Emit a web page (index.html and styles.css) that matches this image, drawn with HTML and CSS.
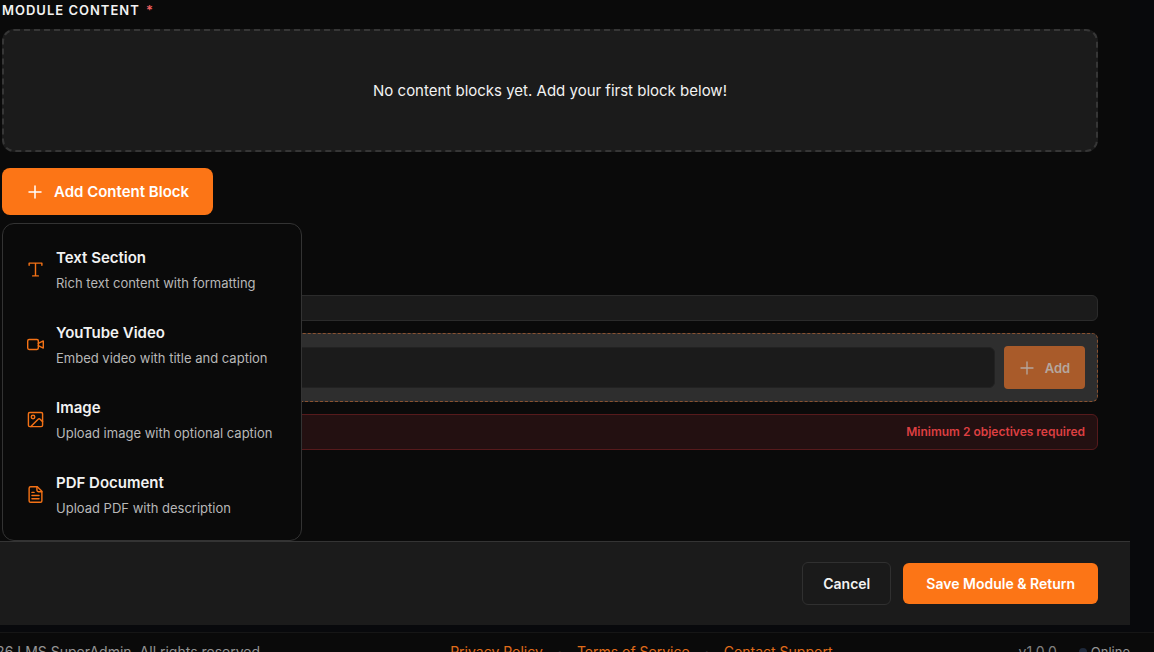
FILE: index.html
```html
<!DOCTYPE html>
<html lang="en">
<head>
<meta charset="utf-8">
<meta name="viewport" content="width=device-width, initial-scale=1">
<title>Module editor</title>
<link rel="stylesheet" href="styles.css">
</head>
<body>
<main class="editor">
  <form class="editor-body">
    <h2 class="section-label">Module Content <span class="required">*</span></h2>
    <p class="empty-state">No content blocks yet. Add your first block below!</p>

    <div class="add-block">
      <button type="button" class="btn btn-primary btn-add-block" aria-expanded="true">
        <svg class="icon icon-plus" viewBox="0 0 24 24"><path d="M4 12h16M12 4v16"/></svg>
        Add Content Block
      </button>
      <div class="block-menu">
        <button type="button" class="block-option">
          <svg class="icon" viewBox="0 0 24 24"><path d="M3 6V3h18v3M8 21h8M12 3v18"/></svg>
          <span class="option-text"><strong class="option-title">Text Section</strong><span class="option-desc">Rich text content with formatting</span></span>
        </button>
        <button type="button" class="block-option">
          <svg class="icon" viewBox="0 0 24 24"><rect x="1" y="5" width="15" height="14" rx="2"/><path d="M16 10.500l7-3.500v10l-7-3.500"/></svg>
          <span class="option-text"><strong class="option-title">YouTube Video</strong><span class="option-desc">Embed video with title and caption</span></span>
        </button>
        <button type="button" class="block-option">
          <svg class="icon" viewBox="0 0 24 24"><rect x="2" y="2" width="20" height="20" rx="2"/><circle cx="8.500" cy="8.500" r="2.500"/><path d="M22 15l-3.500-3.500a2 2 0 0 0-2.800 0L5.500 22"/></svg>
          <span class="option-text"><strong class="option-title">Image</strong><span class="option-desc">Upload image with optional caption</span></span>
        </button>
        <button type="button" class="block-option">
          <svg class="icon" viewBox="0 0 24 24"><path d="M14.500 1H5a2 2 0 0 0-2 2v18a2 2 0 0 0 2 2h14a2 2 0 0 0 2-2V7.500z"/><path d="M14 1v5a2 2 0 0 0 2 2h5M7 9h3M7 13.500h10M7 18h10"/></svg>
          <span class="option-text"><strong class="option-title">PDF Document</strong><span class="option-desc">Upload PDF with description</span></span>
        </button>
      </div>
    </div>

    <section class="objectives">
      <div class="objective-list"></div>
      <div class="objective-entry">
        <input class="objective-input" type="text" aria-label="Learning objective">
        <button type="button" class="btn btn-primary btn-add" disabled>
          <svg class="icon icon-plus" viewBox="0 0 24 24"><path d="M3 12h18M12 3v18"/></svg>
          Add
        </button>
      </div>
      <p class="objective-alert">Minimum 2 objectives required</p>
    </section>
  </form>

  <div class="action-bar">
    <button type="button" class="btn btn-secondary">Cancel</button>
    <button type="button" class="btn btn-primary btn-save">Save Module &amp; Return</button>
  </div>
</main>

<footer class="site-footer">
  <span class="copyright">© 2026 LMS SuperAdmin. All rights reserved.</span>
  <nav class="footer-links">
    <a href="#">Privacy Policy</a><span class="separator">·</span>
    <a href="#">Terms of Service</a><span class="separator">·</span>
    <a href="#">Contact Support</a>
  </nav>
  <div class="footer-status">
    <span class="version">v1.0.0</span>
    <span class="status"><span class="status-dot"></span>Online</span>
  </div>
</footer>
</body>
</html>
```
FILE: styles.css
```css
* {
  box-sizing: border-box;
}

body {
  margin: 0;
  height: 100vh;
  overflow: hidden;
  background: #08090c;
  color: #f2f2f2;
  font-family: Inter, "Liberation Sans", sans-serif;
  font-size: 15px;
  line-height: 20px;
}

button,
input {
  font: inherit;
  color: inherit;
}

p,
h2 {
  margin: 0;
}

.editor {
  margin-right: 24px;
  background: #0a0a0a;
}

.editor-body {
  padding: 0 32px 91px 2px;
}

.section-label {
  padding-bottom: 9px;
  font-size: 13px;
  font-weight: 600;
  letter-spacing: 1px;
  text-transform: uppercase;
}

.required {
  margin-left: 2px;
  color: #f06060;
}

.empty-state {
  padding: 50px 32px 49px;
  border: 2px dashed #363636;
  border-radius: 12px;
  background: #1b1b1b;
  text-align: center;
}

.add-block {
  position: relative;
  display: flex;
  margin-top: 16px;
}

.btn {
  display: inline-flex;
  align-items: center;
  justify-content: center;
  gap: 10px;
  border: 0;
  border-radius: 6px;
  font-weight: 600;
}

.btn-primary {
  background: #fc7516;
  color: #fff;
}

.btn-add-block {
  height: 47px;
  padding: 0 24px;
  border-radius: 8px;
}

.icon {
  flex: none;
  width: 17px;
  height: 17px;
  fill: none;
  stroke: currentColor;
  stroke-width: 2;
  stroke-linecap: round;
  stroke-linejoin: round;
}

.btn-add-block .icon {
  width: 18px;
  height: 18px;
}

.block-menu {
  position: absolute;
  top: 100%;
  left: 0;
  z-index: 2;
  width: 300px;
  margin-top: 8px;
  padding: 8px;
  border: 1px solid #333;
  border-radius: 12px;
  background: #0a0a0a;
}

.block-option {
  display: flex;
  align-items: center;
  gap: 12px;
  width: 100%;
  height: 75px;
  padding: 0 16px;
  border: 0;
  background: none;
  text-align: left;
}

.block-option .icon {
  color: #f47216;
}

.option-text {
  display: flex;
  flex-direction: column;
  gap: 5px;
  padding-top: 2px;
  white-space: nowrap;
}

.option-title {
  font-weight: 600;
}

.option-desc {
  color: #b8b8b8;
  font-size: 13px;
}

.objectives {
  display: flex;
  flex-direction: column;
  gap: 12px;
  margin-top: 80px;
}

.objective-list {
  height: 26px;
  border: 1px solid #2b2b2b;
  border-radius: 6px;
  background: #1b1b1b;
}

.objective-entry {
  display: flex;
  align-items: center;
  gap: 9px;
  padding: 12px;
  border: 1px dashed #8a5230;
  border-radius: 6px;
  background: #2e2e2e;
}

.objective-input {
  flex: 1;
  min-width: 0;
  height: 41px;
  padding: 0 16px;
  border: 1px solid #222;
  border-radius: 6px;
  background: #1b1b1b;
}

.btn-add {
  width: 81px;
  height: 43px;
  border-radius: 4px;
  background: #a95b2a;
  color: #b5a79e;
  font-size: 13px;
}

.btn-add .icon {
  width: 16px;
  height: 16px;
}

.objective-alert {
  padding: 7px 12px;
  border: 1px solid #561a1c;
  border-radius: 6px;
  background: #231011;
  color: #dc3f41;
  font-size: 12px;
  font-weight: 600;
  text-align: right;
}

.action-bar {
  display: flex;
  align-items: center;
  justify-content: flex-end;
  gap: 12px;
  padding: 20px 32px 20px 2px;
  border-top: 1px solid #343434;
  background: #1b1b1b;
}

.btn-secondary {
  height: 43px;
  padding: 0 20px;
  border: 1px solid #303030;
  background: #1a1a1a;
  font-size: 14px;
}

.btn-save {
  height: 41px;
  padding: 0 23px;
  font-size: 14px;
}

.site-footer {
  display: flex;
  align-items: center;
  justify-content: space-between;
  margin-top: 7px;
  padding: 9px 24px 10px 0;
  border-top: 1px solid #161616;
  background: #0a0a0a;
  color: #959595;
  font-size: 14px;
  white-space: nowrap;
}

.copyright {
  margin-left: -38px;
}

.footer-links {
  display: flex;
  gap: 15px;
}

.footer-links a {
  color: #e06c1a;
  text-decoration: none;
}

.separator {
  color: #333;
}

.footer-status {
  display: flex;
  justify-content: flex-end;
  gap: 22px;
}

.version {
  color: #808080;
}

.status {
  display: flex;
  align-items: center;
  gap: 4px;
  font-size: 13px;
}

.status-dot {
  width: 8px;
  height: 8px;
  border-radius: 50%;
  background: #1e293b;
}
```
